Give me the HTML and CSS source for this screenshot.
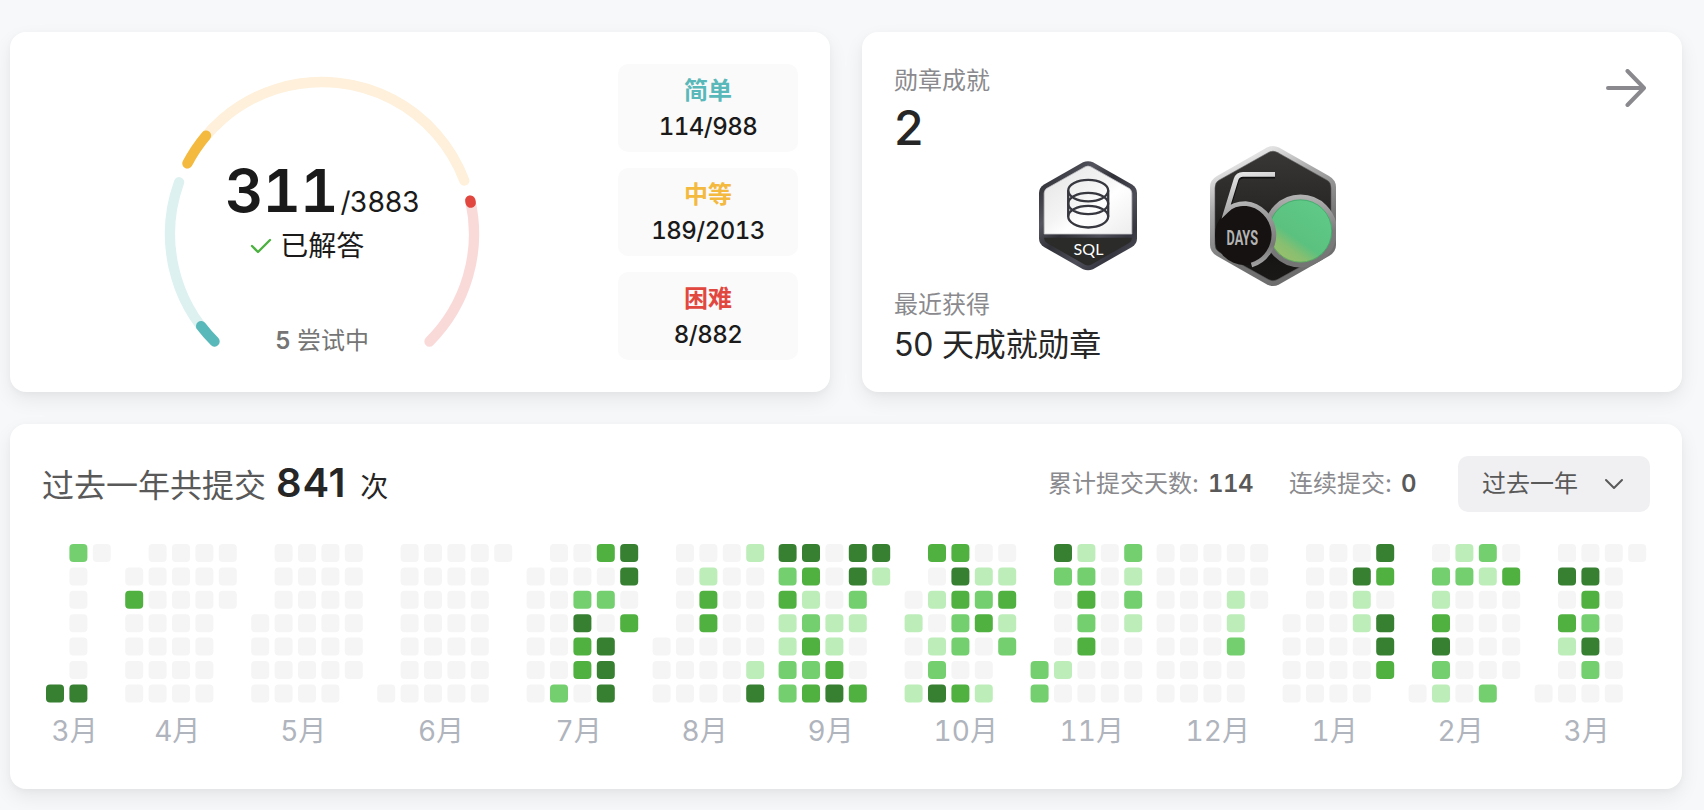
FILE: index.html
```html
<!DOCTYPE html>
<html lang="zh-CN">
<head>
<meta charset="utf-8">
<title>个人主页</title>
<link rel="stylesheet" href="styles.css">
</head>
<body>
<main class="page">
  <div class="top-row">
    <section class="card solved">
      <div class="gauge">
        <svg class="gauge-ring" viewBox="0 0 320 320" aria-hidden="true">
          <g class="arc">
            <circle class="easy faint" cx="160" cy="160" r="152" pathLength="360" stroke-dasharray="64.9 400" transform="rotate(135 160 160)"/>
            <circle class="medium faint" cx="160" cy="160" r="152" pathLength="360" stroke-dasharray="131.7 400" transform="rotate(207.7 160 160)"/>
            <circle class="hard faint" cx="160" cy="160" r="152" pathLength="360" stroke-dasharray="57.7 400" transform="rotate(347.3 160 160)"/>
            <circle class="easy" cx="160" cy="160" r="152" pathLength="360" stroke-dasharray="7.7 400" transform="rotate(135 160 160)"/>
            <circle class="medium" cx="160" cy="160" r="152" pathLength="360" stroke-dasharray="12.6 400" transform="rotate(207.7 160 160)"/>
            <circle class="hard" cx="160" cy="160" r="152" pathLength="360" stroke-dasharray="0.8 400" transform="rotate(347.3 160 160)"/>
          </g>
        </svg>
        <div class="gauge-text">
          <div class="total"><b>311</b><span>/3883</span></div>
          <div class="done">
            <svg class="check" viewBox="0 0 22 16" aria-hidden="true"><path d="M2 8l6 6L20 2"/></svg>
            <span>已解答</span>
          </div>
          <div class="trying"><b>5</b> 尝试中</div>
        </div>
      </div>
      <div class="levels">
        <div class="level"><span class="level-name c-easy">简单</span><span class="level-num">114/988</span></div>
        <div class="level"><span class="level-name c-medium">中等</span><span class="level-num">189/2013</span></div>
        <div class="level"><span class="level-name c-hard">困难</span><span class="level-num">8/882</span></div>
      </div>
    </section>

    <section class="card medals">
      <div class="medal-info">
        <div>
          <div class="label">勋章成就</div>
          <div class="medal-count">2</div>
        </div>
        <div>
          <div class="label">最近获得</div>
          <div class="medal-name">50 天成就勋章</div>
        </div>
      </div>
      <div class="badges">
        <svg class="badge-sql" viewBox="0 0 98 110" aria-label="SQL">
          <defs>
            <linearGradient id="sqlRim" x1="0" y1="0" x2="1" y2="1">
              <stop offset="0" stop-color="#2f2f36"/><stop offset=".12" stop-color="#34343b"/><stop offset=".3" stop-color="#55555f"/><stop offset=".45" stop-color="#303038"/><stop offset=".65" stop-color="#4e4e59"/><stop offset=".8" stop-color="#363640"/><stop offset="1" stop-color="#5a5a68"/>
            </linearGradient>
            <linearGradient id="sqlFace" x1="0" y1="0" x2="1" y2="1">
              <stop offset="0" stop-color="#e4e4e4"/><stop offset=".45" stop-color="#f4f4f5"/><stop offset=".6" stop-color="#ffffff"/><stop offset="1" stop-color="#ededed"/>
            </linearGradient>
          </defs>
          <path fill="url(#sqlRim)" d="M44 1.3Q49-1 54 1.3L93 23.500Q98 26.500 98 32V77.500Q98 83 93 86L54 108.200Q49 110.500 44 108.200L5 86Q0 83 0 77.500V32Q0 26.500 5 23.500Z"/>
          <path fill="url(#sqlFace)" stroke="#c9c9cd" stroke-width=".8" d="M5.200 73V32Q5.200 29 8 27.300L46 5.900Q49 4.300 52 5.900L90 27.300Q92.800 29 92.800 32V73Z"/>
          <path fill="#2b2b29" d="M5.200 76.800H92.800Q93 80 90 82L52 103.700Q49 105.300 46 103.700L8 82Q5 80 5.200 76.800Z"/>
          <g fill="none" stroke="#37373f" stroke-width="2.300">
            <path d="M29.200 29.600A20 10.800 0 0 1 69.200 29.600V55.600A20 10.900 0 0 1 29.200 55.600Z"/>
            <path d="M29.200 29.600A20 10.800 0 0 0 69.200 29.600M29.200 42.500A20 10.600 0 0 0 69.200 42.500A20 10.600 0 0 0 29.200 42.500M29.200 55.600A20 10.800 0 0 1 69.200 55.600"/>
          </g>
          <text class="sql-text" x="34.500" y="93.600" textLength="30">SQL</text>
        </svg>
        <svg class="badge-days" viewBox="0 0 126 140" aria-label="50 DAYS">
          <defs>
            <linearGradient id="rim" x1=".2" y1="0" x2=".6" y2="1">
              <stop offset="0" stop-color="#c9c9c9"/><stop offset=".12" stop-color="#e2e2e2"/><stop offset=".35" stop-color="#a9a9a9"/><stop offset=".7" stop-color="#737373"/><stop offset="1" stop-color="#6c6c6c"/>
            </linearGradient>
            <linearGradient id="face" x1="0" y1="0" x2="0" y2="1">
              <stop offset="0" stop-color="#393735"/><stop offset=".4" stop-color="#2b2928"/><stop offset=".7" stop-color="#151312"/><stop offset="1" stop-color="#1b1918"/>
            </linearGradient>
            <linearGradient id="line" gradientUnits="userSpaceOnUse" x1="30" y1="26" x2="50" y2="122">
              <stop offset="0" stop-color="#e6e6e6"/><stop offset=".4" stop-color="#a6a6a6"/><stop offset=".8" stop-color="#777"/><stop offset="1" stop-color="#aaa"/>
            </linearGradient>
            <linearGradient id="ring" x1="0" y1="0" x2="0" y2="1">
              <stop offset="0" stop-color="#b0b0b0"/><stop offset=".5" stop-color="#7c7c7c"/><stop offset="1" stop-color="#747474"/>
            </linearGradient>
            <linearGradient id="disc" x1=".15" y1="1" x2=".85" y2="0">
              <stop offset="0" stop-color="#a3bf6b"/><stop offset=".25" stop-color="#88bf70"/><stop offset=".4" stop-color="#5bc17f"/><stop offset="1" stop-color="#60cb89"/>
            </linearGradient>
            <clipPath id="hexClip"><path d="M57 1.500Q63-1.500 69 1.500L119 30Q126 34 126 41V99Q126 106 119 110L69 138.500Q63 141.500 57 138.500L7 110Q0 106 0 99V41Q0 34 7 30Z"/></clipPath>
          </defs>
          <g clip-path="url(#hexClip)">
            <path fill="url(#rim)" d="M0-2H126V142H0Z"/>
            <path fill="url(#face)" stroke="#555" stroke-width=".6" d="M59 6.200Q63 4.200 67 6.200L117 34.200Q121 36.500 121 42V98Q121 103.500 117 106L67 133.800Q63 135.800 59 133.800L9 106Q5 103.500 5 98V42Q5 36.500 9 34.200Z"/>
            <circle cx="90.500" cy="85" r="34" fill="url(#disc)" stroke="url(#ring)" stroke-width="5"/>
            <circle cx="90.500" cy="85" r="31.200" fill="none" stroke="#2f8f57" stroke-width=".8" opacity=".6"/>
            <circle cx="35" cy="89" r="30" fill="#151211"/>
            <g fill="none" stroke-linejoin="miter" stroke-miterlimit="8">
              <path stroke="#111" stroke-width="3" d="M65 31H34Q29 31 27.500 35L18.500 65"/>
              <path stroke="url(#line)" stroke-width="4.700" d="M65 28.300H33Q27.500 28.300 26 33.500L16.500 64.500C22 59 29 57.500 35.500 57.500A31.500 31.500 0 0 1 41.500 119"/>
            </g>
          </g>
          <text class="days-text" x="16.500" y="99" textLength="31.500" lengthAdjust="spacingAndGlyphs">DAYS</text>
        </svg>
      </div>
      <svg class="arrow" viewBox="0 0 40 38" aria-hidden="true"><path d="M2 19H37M21.500 2L38 19L21.500 36"/></svg>
    </section>
  </div>

  <section class="card activity">
    <header class="activity-head">
      <div class="submits"><span class="submits-label">过去一年共提交</span><b>841</b><span class="unit">次</span></div>
      <div class="stats">
        <div class="stat stat-days">累计提交天数:<b>114</b></div>
        <div class="stat stat-streak">连续提交:<b>0</b></div>
        <button class="range" type="button">过去一年
          <svg class="chevron" viewBox="0 0 20 12" aria-hidden="true"><path d="M2 2l8 8 8-8"/></svg>
        </button>
      </div>
    </header>
    <svg class="calendar" id="calendar" viewBox="0 0 1616 210"></svg>
  </section>
</main>
<script src="calendar.js"></script>
</body>
</html>
```

FILE: calendar.js
```js
// One string per week column, one character per weekday; "." is a day outside the month.
const F = "0000000";
const months = [
  ["3月", ["......4", "2000004", "0......"]],
  ["4月", [".030000", F, F, F, "000...."]],
  ["5月", ["...0000", F, F, F, "000000."]],
  ["6月", ["......0", F, F, F, F, "0......"]],
  ["7月", [".000000", "0000002", "0024330", "3020444", "4403..."]],
  ["8月", ["....000", F, "0133000", F, "1000014"]],
  ["9月", ["4231122", "4312323", "0001134", "4421003", "41....."]],
  ["10月", ["..01001", "3010124", "3432203", "0123001", "01312.."]],
  ["11月", [".....22", "4200010", "1232300", F, "2121000"]],
  ["12月", [F, F, F, "0011200", "000...."]],
  ["1月", ["...0000", F, F, "0411000", "430443."]],
  ["2月", ["......0", "0213421", "1200000", "2100002", "030000."]],
  ["3月", ["......0", "0403100", "0432420", F, "0......"]]
];
const NS = "http://www.w3.org/2000/svg";
const PITCH = 23.4;
const MONTH_GAP = 9;
const svg = document.getElementById("calendar");

function add(name, attrs, text) {
  const el = document.createElementNS(NS, name);
  for (const key in attrs) el.setAttribute(key, attrs[key]);
  if (text) el.textContent = text;
  svg.appendChild(el);
}

let left = 4;
for (const [name, weeks] of months) {
  weeks.forEach((week, col) => {
    [...week].forEach((level, day) => {
      if (level === ".") return;
      add("rect", { class: "day l" + level, x: (left + col * PITCH).toFixed(1), y: (day * PITCH).toFixed(1), width: 18, height: 18, rx: 4 });
    });
  });
  add("text", { class: "month", x: (left + weeks.length * PITCH / 2 - 29.5).toFixed(1), y: 197 }, name);
  left += weeks.length * PITCH + MONTH_GAP;
}
```

FILE: styles.css
```css
* { box-sizing: border-box; }
body {
  margin: 0;
  background: #f7f8fa;
  color: #1a1a1a;
  font-family: Inter, "Noto Sans CJK SC", sans-serif;
  font-size: 24px;
}
b { font-weight: 600; }
.page {
  display: flex;
  flex-direction: column;
  gap: 32px;
  width: 1704px;
  height: 810px;
  padding: 32px 22px 0 10px;
  overflow: hidden;
}
.top-row { display: grid; grid-template: 360px / 1fr 1fr; gap: 32px; }
.card {
  background: #fff;
  border-radius: 16px;
  box-shadow: 0 8px 20px rgba(0, 0, 0, .07), 0 2px 6px rgba(0, 0, 0, .03);
}

.solved { display: flex; justify-content: space-between; padding: 32px; }
.gauge { display: grid; width: 320px; height: 320px; margin: 9.800px 0 0 120.200px; }
.gauge-ring, .gauge-text { grid-area: 1 / 1; }
.gauge-ring { width: 320px; height: 320px; }
.arc circle { fill: none; stroke-width: 10.300; stroke-linecap: round; }
.arc .easy { stroke: #59b8b9; }
.arc .medium { stroke: #f4b93f; }
.arc .hard { stroke: #e2473f; }
.arc .easy.faint { stroke: #dcf1f0; }
.arc .medium.faint { stroke: #fef0da; }
.arc .hard.faint { stroke: #f9dad9; }
.gauge-text { display: flex; flex-direction: column; align-items: center; padding-top: 80px; }
.total { display: flex; align-items: baseline; height: 72px; line-height: 72px; font-feature-settings: "tnum"; }
.total b { font-size: 59.500px; letter-spacing: -1px; }
.total span { font-size: 28px; margin-left: 3px; letter-spacing: -.800px; }
.done { display: flex; align-items: center; gap: 8px; height: 36px; font-size: 28px; line-height: 36px; margin: 2px 30px 0 0; }
.check { width: 22px; height: 16px; fill: none; stroke: #4cb140; stroke-width: 2.400; stroke-linecap: round; stroke-linejoin: round; }
.trying { margin-top: 61px; line-height: 32px; color: #757575; }

.levels { display: flex; flex-direction: column; gap: 16px; width: 180px; }
.level {
  display: flex;
  flex-direction: column;
  align-items: center;
  height: 88px;
  padding-top: 9px;
  border-radius: 10px;
  background: #fafafa;
}
.level span { line-height: 36px; }
.level-name { font-weight: 600; }
.level-num { font-weight: 500; letter-spacing: -.500px; font-feature-settings: "tnum"; }
.c-easy { color: #59b8b9; }
.c-medium { color: #f4b93f; }
.c-hard { color: #e2473f; }

.medals { display: grid; grid-template: 305px / 100%; padding: 32px 32px 23px; color: #262626; }
.medal-info, .badges, .arrow { grid-area: 1 / 1; }
.medal-info { display: flex; flex-direction: column; justify-content: space-between; padding-top: 1px; }
.label { color: #8a8a8e; line-height: 32px; }
.medal-count { font-size: 48px; font-weight: 450; line-height: 61px; }
.medal-name { font-size: 32px; line-height: 48px; letter-spacing: -.200px; }
.badges { display: flex; align-items: center; gap: 73px; padding: 8px 0 9px 145px; }
.badge-sql { width: 98px; height: 110px; }
.badge-days { width: 126px; height: 140px; }
.sql-text { fill: #fff; font: 400 16px Lato, sans-serif; }
.days-text { fill: #b3b3b3; font: 700 20.500px Roboto, sans-serif; }
.arrow { justify-self: end; width: 40px; height: 38px; margin: 5px 4px 0 0; fill: none; stroke: #8a8a8e; stroke-width: 4; stroke-linecap: round; stroke-linejoin: round; }

.activity { height: 365px; padding: 32px 32px 0; }
.activity-head { display: flex; justify-content: space-between; height: 56px; margin-bottom: 32px; }
.submits { display: flex; align-items: baseline; height: 56px; line-height: 53px; color: #262626; }
.submits-label { font-size: 32px; color: #595959; }
.submits b { font-size: 40px; letter-spacing: .800px; margin: 0 14px 0 10px; }
.unit { font-size: 28px; }
.stats { display: flex; align-items: center; line-height: 56px; color: #8a8a8e; }
.stat b { margin-left: 9px; color: #595959; letter-spacing: -.500px; font-feature-settings: "tnum"; }
.stat-days { margin-right: 36px; }
.stat-streak { margin-right: 42px; }
.range {
  display: flex;
  align-items: center;
  justify-content: space-between;
  width: 192px;
  height: 56px;
  padding: 0 26px 0 24px;
  border: 0;
  border-radius: 10px;
  background: #f0f0f2;
  color: #595959;
  font: inherit;
}
.chevron { width: 20px; height: 12px; fill: none; stroke: #595959; stroke-width: 2; stroke-linecap: round; stroke-linejoin: round; }
.calendar { display: block; width: 1616px; height: 210px; overflow: visible; }
.l0 { fill: #f5f5f5; }
.l1 { fill: #bdeeba; }
.l2 { fill: #74d06f; }
.l3 { fill: #50b140; }
.l4 { fill: #378032; }
.month { fill: #afb4bd; font-size: 28px; font-feature-settings: "tnum"; }
```
